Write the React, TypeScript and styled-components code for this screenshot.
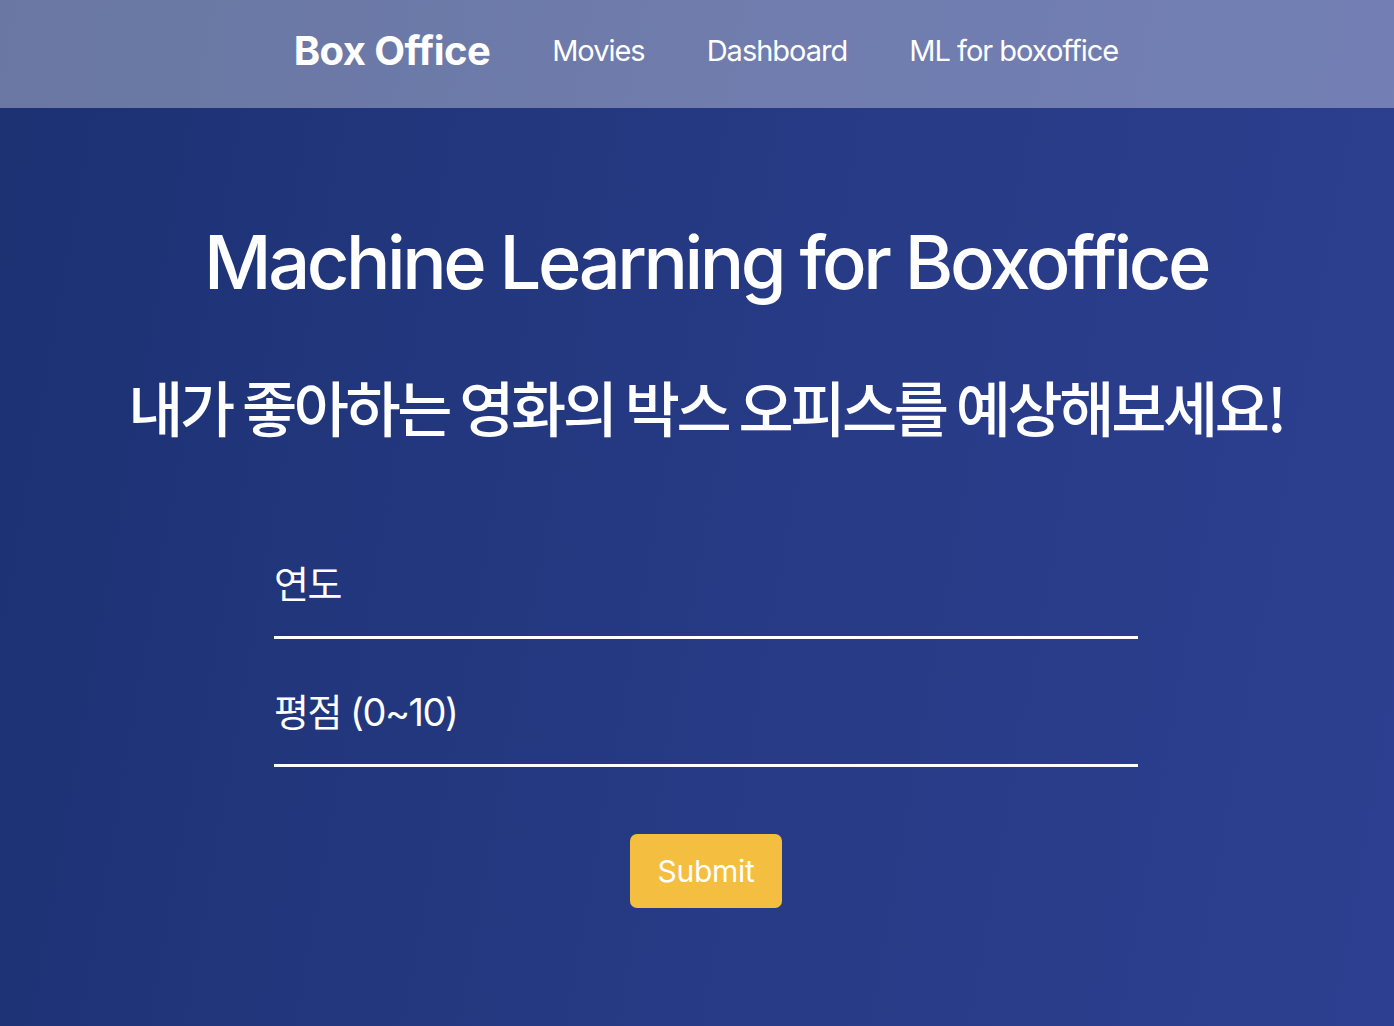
import React from "react";
import styled, { createGlobalStyle } from "styled-components";

const Global = createGlobalStyle`
  html, body { margin: 0; padding: 0; }
  body {
    font-family: Inter, "Noto Sans CJK KR", sans-serif;
    background: #1d3275;
  }
  * { box-sizing: border-box; }
`;

const Page = styled.div`
  min-height: 1026px;
  background: linear-gradient(100deg, #1c3172 0%, #263a84 50%, #2d3f90 100%);
  color: #fff;
`;

const NavBar = styled.header`
  height: 108px;
  background: rgba(255, 255, 255, 0.34);
  display: flex;
  align-items: center;
  justify-content: center;
  gap: 62px;
  padding: 0 0 8px 18px;
`;

const Brand = styled.a`
  font-size: 40px;
  font-weight: 700;
  letter-spacing: -0.6px;
  color: #fff;
  text-decoration: none;
`;

const NavLink = styled.a`
  font-size: 29px;
  font-weight: 400;
  letter-spacing: -1px;
  color: #fff;
  text-decoration: none;
`;

const Main = styled.main`
  display: flex;
  flex-direction: column;
  align-items: center;
  padding: 112px 0 0 18px;
`;

const Title = styled.h1`
  margin: 0;
  font-size: 74px;
  font-weight: 500;
  letter-spacing: -3.45px;
  line-height: 84px;
`;

const Subtitle = styled.h2`
  margin: 62px 0 0;
  font-family: "Noto Sans CJK KR", sans-serif;
  font-size: 60px;
  font-weight: 500;
  letter-spacing: -3.4px;
  line-height: 80px;
`;

const Form = styled.form`
  width: 864px;
  margin-top: 103px;
  display: flex;
  flex-direction: column;
  align-items: center;
`;

const Field = styled.input`
  width: 100%;
  height: 90px;
  background: transparent;
  border: none;
  border-bottom: 3px solid #fff;
  color: #fff;
  font-family: Inter, "Noto Sans CJK KR", sans-serif;
  font-size: 38px;
  letter-spacing: -1.5px;
  padding: 0 0 17px;
  outline: none;
  & + & { margin-top: 38px; }
  &::placeholder { color: #fff; opacity: 1; }
`;

const SubmitButton = styled.button`
  margin-top: 67px;
  width: 152px;
  height: 74px;
  border: none;
  border-radius: 7px;
  background: #f4be41;
  color: #fff;
  font-family: Inter, sans-serif;
  font-size: 30px;
  font-weight: 400;
  letter-spacing: -0.3px;
  cursor: pointer;
`;

export default function App() {
  return (
    <Page>
      <Global />
      <NavBar>
        <Brand href="#">Box Office</Brand>
        <NavLink href="#">Movies</NavLink>
        <NavLink href="#">Dashboard</NavLink>
        <NavLink href="#">ML for boxoffice</NavLink>
      </NavBar>
      <Main>
        <Title>Machine Learning for Boxoffice</Title>
        <Subtitle>내가 좋아하는 영화의 박스 오피스를 예상해보세요!</Subtitle>
        <Form onSubmit={(e) => e.preventDefault()}>
          <Field type="text" placeholder="연도" />
          <Field type="text" placeholder="평점 (0~10)" />
          <SubmitButton type="submit">Submit</SubmitButton>
        </Form>
      </Main>
    </Page>
  );
}
